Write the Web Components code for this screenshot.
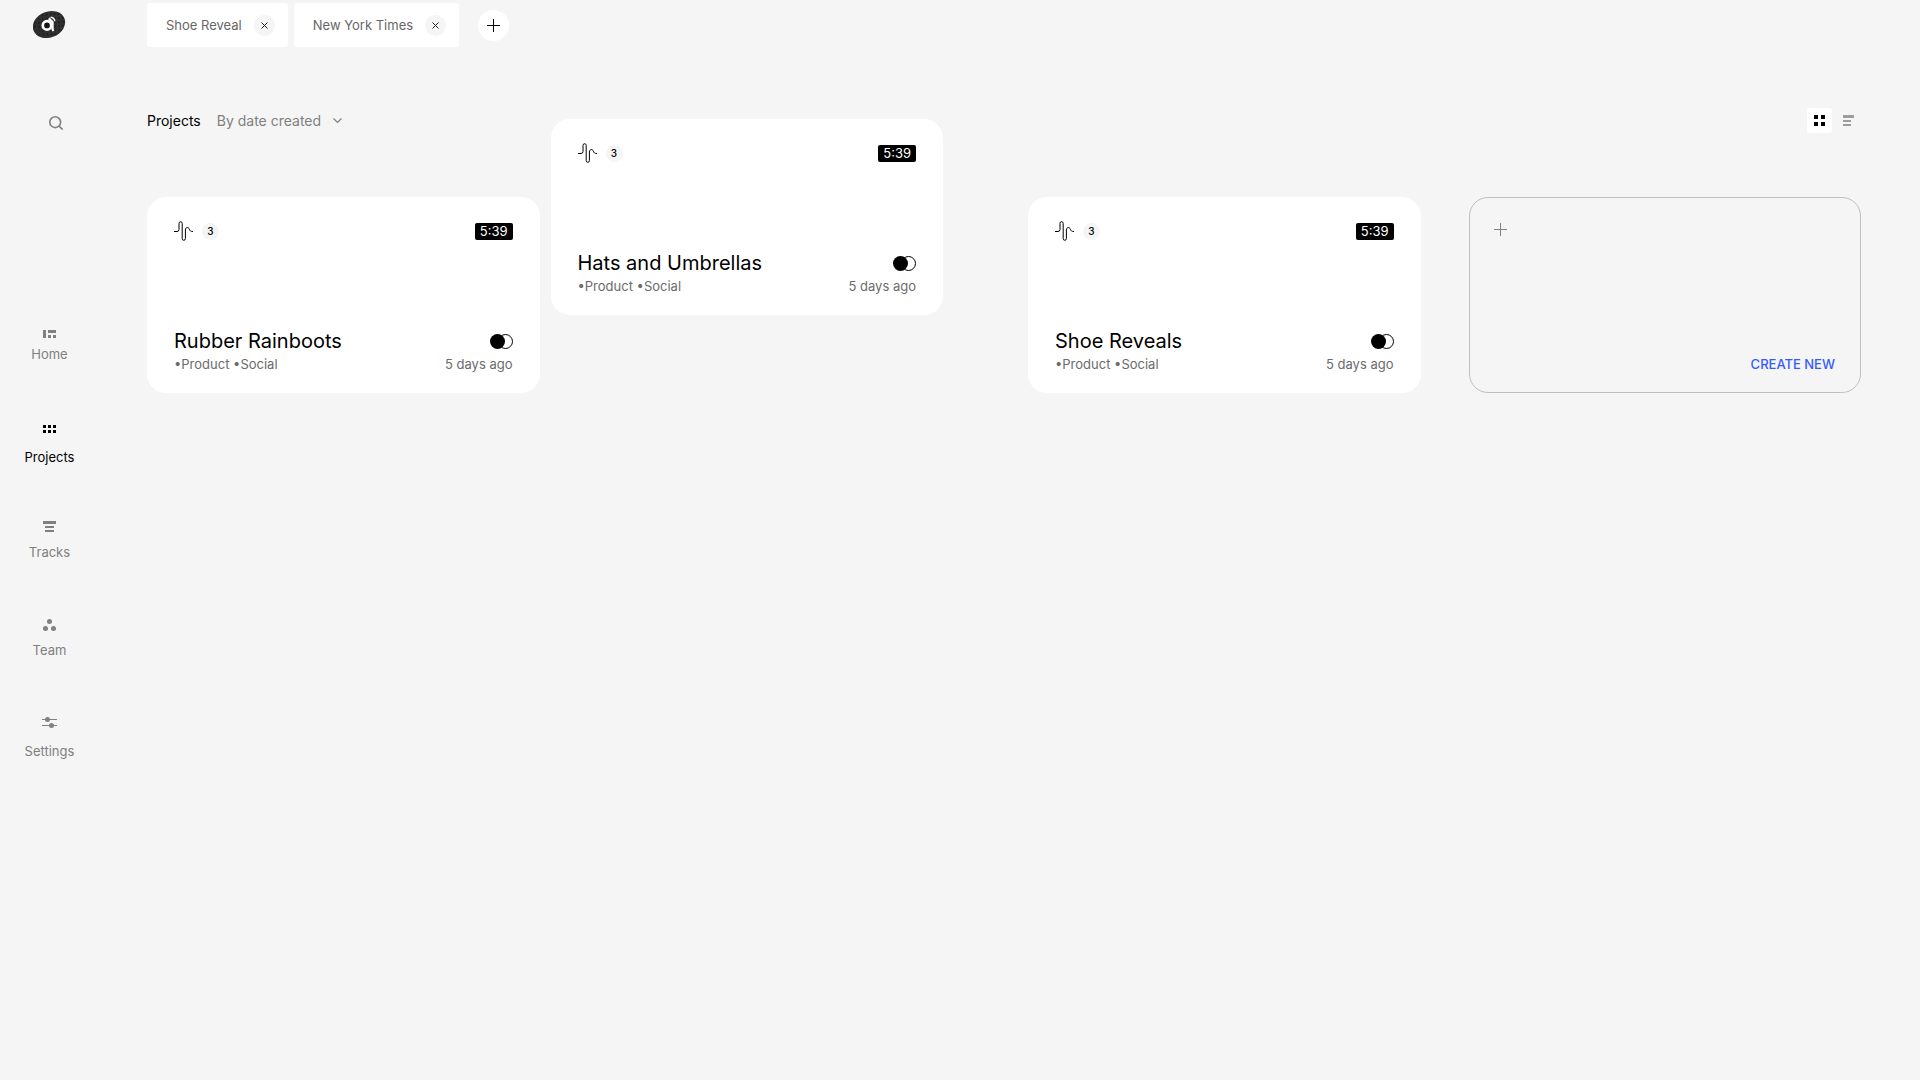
<!DOCTYPE html>
<html lang="en">
<head>
<meta charset="utf-8">
<meta name="viewport" content="width=device-width, initial-scale=1">
<title>Projects</title>
<style>
  html { background: #f5f5f5; }
  body { margin: 0; min-height: 100vh; font-family: Inter, "Liberation Sans", sans-serif; font-size: 13px; line-height: 16px; color: #000; }
</style>
</head>
<body>
<app-shell>
  <side-bar slot="side">
    <nav-item icon="home">Home</nav-item>
    <nav-item icon="projects" current>Projects</nav-item>
    <nav-item icon="tracks">Tracks</nav-item>
    <nav-item icon="team">Team</nav-item>
    <nav-item icon="settings">Settings</nav-item>
  </side-bar>
  <tab-strip slot="top">
    <open-tab>Shoe Reveal</open-tab>
    <open-tab>New York Times</open-tab>
  </tab-strip>
  <project-toolbar></project-toolbar>
  <card-grid>
    <project-card time="5:39" tracks="3" age="5 days ago" tags="•Product •Social">Rubber Rainboots</project-card>
    <project-card dragging time="5:39" tracks="3" age="5 days ago" tags="•Product •Social">Hats and Umbrellas</project-card>
    <project-card time="5:39" tracks="3" age="5 days ago" tags="•Product •Social">Shoe Reveals</project-card>
    <create-card>CREATE NEW</create-card>
  </card-grid>
</app-shell>
<script>
const base = `<style>
  *, *::before { box-sizing: border-box; }
  button, select { font: inherit; color: inherit; background: none; border: 0; margin: 0; padding: 0; cursor: pointer; }
  a { color: inherit; text-decoration: none; }
  svg { display: block; flex: none; }
</style>`;

function define(name, render) {
  customElements.define(name, class extends HTMLElement {
    connectedCallback() {
      if (this.shadowRoot) return;
      const template = document.createElement('template');
      template.innerHTML = base + render(this);
      this.attachShadow({ mode: 'open' }).append(template.content.cloneNode(true));
    }
  });
}

define('app-shell', () => `<style>
  :host { display: grid; grid-template-columns: 99px minmax(0, 1fr); min-height: 100vh; }
  main { padding: 3px 59px 0 48px; }
</style>
<slot name="side"></slot>
<main><slot name="top"></slot><slot></slot></main>`);

define('side-bar', () => `<style>
  :host { display: flex; flex-direction: column; align-items: center; padding-top: 10px; }
  .search { margin: 76px 0 0 13px; color: #808080; }
  nav { display: flex; flex-direction: column; align-items: center; gap: 56px; margin-top: 200px; }
</style>
<a href="#" aria-label="Dashboard">
  <svg width="34" height="30" viewBox="0 0 34 30">
    <defs><pattern id="dots" width="4" height="4" patternUnits="userSpaceOnUse" patternTransform="rotate(20)"><rect width="4" height="4" fill="#303030"/><circle cx="2" cy="2" r=".8" fill="#0c0c0c"/></pattern></defs>
    <ellipse cx="16" cy="14.5" rx="16.6" ry="13" transform="rotate(-22 16 14.5)" fill="url(#dots)"/>
    <circle cx="14" cy="15.4" r="4.2" fill="#151515" stroke="#fff" stroke-width="2.7"/>
    <path d="M15.8 8.4 19.6 12.2V19.2L20.4 21" fill="none" stroke="#fff" stroke-width="2.2"/>
    <path d="M17.6 7.2c2.6.2 4 1.4 4.2 4" fill="none" stroke="#fff" stroke-width="1.4"/>
  </svg>
</a>
<button class="search" aria-label="Search">
  <svg width="14" height="14" viewBox="0 0 14 14" fill="none" stroke="currentColor" stroke-width="1.6"><circle cx="6.2" cy="6.2" r="5.4"/><path d="m10 10 3.6 3.6"/></svg>
</button>
<nav aria-label="Main"><slot></slot></nav>`);

const navIcons = {
  home: [16, '<path d="M1 0h3v8H1zM6 0h8v3H6zM6 5h3v3H6zM11 5h3v3h-3z"/>'],
  projects: [31, '<path d="M1 7h3v3H1zM6 7h3v3H6zM11 7h3v3h-3zM1 12h3v3H1zM6 12h3v3H6zM11 12h3v3h-3z"/>'],
  tracks: [23, '<path d="M1 0h13v3H1zM3 5h9v2H3zM3 9h9v2H3z"/>'],
  team: [26, '<circle cx="7.5" cy="5.5" r="2.5"/><circle cx="3.5" cy="12.5" r="2.5"/><circle cx="11.5" cy="12.5" r="2.5"/>'],
  settings: [29, '<path d="M0 5h15v1H0zM0 11h15v1H0z"/><circle cx="5.5" cy="5.5" r="2.5"/><circle cx="9.5" cy="11.5" r="2.5"/>']
};
define('nav-item', el => {
  const [height, shapes] = navIcons[el.getAttribute('icon')];
  return `<style>
  :host { display: block; color: #808080; }
  :host([current]) { color: #000; }
  a { display: flex; flex-direction: column; align-items: center; }
</style>
<a href="#"${el.hasAttribute('current') ? ' aria-current="page"' : ''}>
  <svg width="15" height="${height}" viewBox="0 0 15 ${height}" fill="currentColor">${shapes}</svg>
  <slot></slot>
</a>`;
});

define('tab-strip', () => `<style>
  :host { display: flex; align-items: center; gap: 6px; }
  button { display: grid; place-items: center; width: 31px; height: 31px; margin-left: 13px; border-radius: 50%; background: #fff; }
</style>
<slot></slot>
<button aria-label="New tab"><svg width="13" height="13" viewBox="0 0 13 13" fill="none" stroke="#000"><path d="M0 6.5h13M6.5 0v13"/></svg></button>`);

define('open-tab', () => `<style>
  :host { display: flex; align-items: center; gap: 12px; height: 44px; padding: 0 13px 0 19px; border-radius: 3px; background: #fff; color: #666; }
  a { white-space: nowrap; }
  button { display: grid; place-items: center; width: 21px; height: 21px; border-radius: 50%; background: #f5f5f5; }
</style>
<a href="#"><slot></slot></a>
<button aria-label="Close tab"><svg width="7" height="7" viewBox="0 0 7 7" fill="none" stroke="#222"><path d="m.5.5 6 6M6.5.5l-6 6"/></svg></button>`);

define('project-toolbar', () => `<style>
  :host { display: flex; align-items: center; margin: 61px 0 64px; font-size: 14px; }
  h1 { margin: 0 16px 0 0; font: inherit; }
  label { display: flex; align-items: center; gap: 11px; color: #808080; }
  select { appearance: none; }
  .views { display: flex; gap: 4px; margin-left: auto; color: #9d9d9d; }
  .views button { display: grid; place-items: center; width: 25px; height: 25px; border-radius: 3px; }
  .views [aria-pressed="true"] { background: #fff; color: #000; }
</style>
<h1>Projects</h1>
<label><select aria-label="Sort projects"><option>By date created</option></select>
  <svg width="9" height="6" viewBox="0 0 9 6" fill="none" stroke="currentColor" stroke-width="1.2"><path d="m.5.5 4 4 4-4"/></svg></label>
<div class="views">
  <button aria-label="Grid view" aria-pressed="true"><svg width="11" height="11" viewBox="0 0 11 11" fill="currentColor"><path d="M0 0h4v4H0zM7 0h4v4H7zM0 7h4v4H0zM7 7h4v4H7z"/></svg></button>
  <button aria-label="List view" aria-pressed="false"><svg width="11" height="11" viewBox="0 0 11 11" fill="currentColor"><path d="M0 0h11v3H0zM0 5h8v2H0zM0 9h8v2H0z"/></svg></button>
</div>`);

define('card-grid', () => `<style>
  :host { display: grid; grid-template-columns: repeat(4, minmax(0, 1fr)); gap: 48px; }
</style><slot></slot>`);

define('project-card', el => `<style>
  :host { display: flex; flex-direction: column; justify-content: space-between; min-height: 196px; padding: 24px 27px 19px 27px; box-sizing: border-box; border-radius: 19px; background: #fff; }
  /* Offset of the card while it is held by the pointer, above its neighbours. */
  :host([dragging]) { position: relative; left: -37px; top: -78px; z-index: 1; }
  .row { display: flex; align-items: center; justify-content: space-between; }
  .tracks { display: flex; align-items: center; gap: 9px; }
  .count { width: 17px; border-radius: 50%; background: #f5f5f5; font-size: 10px; font-weight: 500; line-height: 17px; text-align: center; }
  time { padding: 0 5px; border-radius: 2px; background: #000; color: #fff; line-height: 17px; }
  h2 { margin: 0; font-size: 20px; font-weight: 400; line-height: 26px; }
  .meta { color: #6b6b6b; line-height: 20px; }
</style>
<div class="row">
  <div class="tracks">
    <svg width="19" height="20" viewBox="0 0 19 20" fill="none" stroke="#000"><path d="M0 10.5h3Q5 10.5 5 8.5V2.5a1.6 1.8 0 0 1 3.2 0V17.5a1.6 1.8 0 0 0 3.2 0V9c0-3 3.2-3.2 4-.8.6 1.7 1.2 2.3 3.6 2.3"/></svg>
    <span class="count">${el.getAttribute('tracks')}</span>
  </div>
  <time>${el.getAttribute('time')}</time>
</div>
<div>
  <div class="row"><h2><slot></slot></h2>
    <svg width="23" height="15" viewBox="0 0 23 15"><circle cx="15.5" cy="7.5" r="7" fill="#fff" stroke="#000"/><circle cx="7.5" cy="7.5" r="7.5"/></svg></div>
  <div class="row meta"><span>${el.getAttribute('tags')}</span><span>${el.getAttribute('age')}</span></div>
</div>`);

define('create-card', () => `<style>
  :host { display: block; }
  button { display: flex; flex-direction: column; justify-content: space-between; width: 100%; height: 100%; min-height: 196px; padding: 25px 25px 20px 24px; border: 1px solid #bfbfbf; border-radius: 19px; }
  span { align-self: flex-end; color: #335cff; font-weight: 500; }
</style>
<button><svg width="13" height="13" viewBox="0 0 13 13" fill="none" stroke="#808080"><path d="M0 6.5h13M6.5 0v13"/></svg><span><slot></slot></span></button>`);
</script>
</body>
</html>
